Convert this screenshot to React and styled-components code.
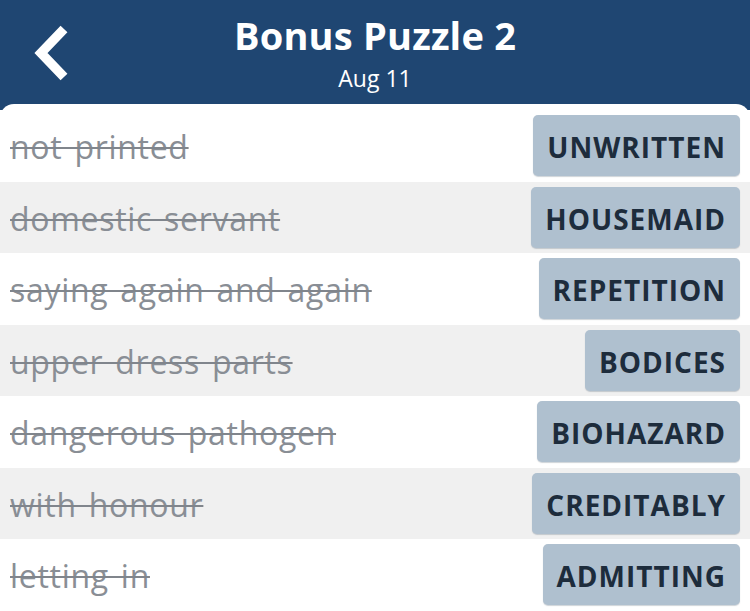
import React from 'react';
import styled, { createGlobalStyle } from 'styled-components';

const GlobalStyle = createGlobalStyle`
  html, body {
    margin: 0;
    padding: 0;
    background: #1f4672;
    font-family: 'Open Sans', 'Liberation Sans', sans-serif;
  }
`;

const Page = styled.div`
  width: 750px;
  height: 611px;
  overflow: hidden;
  background: #1f4672;
  display: flex;
  flex-direction: column;
`;

const Header = styled.header`
  height: 104px;
  display: grid;
  grid-template-columns: 1fr auto 1fr;
  align-items: start;
  color: #fff;
`;

const BackButton = styled.button`
  justify-self: start;
  margin: 25px 0 0 31px;
  padding: 0;
  border: none;
  background: none;
  width: 40px;
  height: 56px;
  cursor: pointer;
`;

const TitleBlock = styled.div`
  display: flex;
  flex-direction: column;
  align-items: center;
  padding-top: 9px;
`;

const Title = styled.h1`
  margin: 0;
  font-size: 38px;
  font-weight: 700;
  line-height: 52px;
  letter-spacing: 0.2px;
`;

const Subtitle = styled.div`
  font-size: 23px;
  line-height: 32px;
  margin-top: 1px;
`;

const Card = styled.main`
  flex: 1;
  background: #fff;
  border-radius: 14px 14px 0 0;
  padding-top: 6px;
`;

const Row = styled.div`
  height: 71.5px;
  display: flex;
  align-items: center;
  justify-content: space-between;
  padding: 0 10px 0 10px;
  background: ${(p) => (p.$shaded ? '#f0f0f0' : '#fff')};
`;

const Clue = styled.span`
  font-size: 32px;
  letter-spacing: 0.7px;
  word-spacing: 3px;
  color: #898e95;
  text-decoration: line-through;
  text-decoration-thickness: 2px;
  text-decoration-color: #80858c;
  padding-top: 2px;
`;

const Answer = styled.div`
  height: 61px;
  display: flex;
  align-items: center;
  padding: 3px 14px 0 14px;
  box-sizing: border-box;
  background: #afc0cf;
  border-radius: 5px;
  box-shadow: 0 1px 1px rgba(60, 80, 100, 0.25);
  color: #1d2c3c;
  font-size: 28px;
  font-weight: 700;
  letter-spacing: 1px;
`;

const entries = [
  ['not printed', 'UNWRITTEN'],
  ['domestic servant', 'HOUSEMAID'],
  ['saying again and again', 'REPETITION'],
  ['upper dress parts', 'BODICES'],
  ['dangerous pathogen', 'BIOHAZARD'],
  ['with honour', 'CREDITABLY'],
  ['letting in', 'ADMITTING'],
];

const App = () => {
  return (
    <>
      <GlobalStyle />
      <Page>
        <Header>
          <BackButton aria-label="Back">
            <svg width="40" height="56" viewBox="0 0 40 56">
              <polyline
                points="33,4 10,28 33,52"
                fill="none"
                stroke="#fff"
                strokeWidth="9.5"
                strokeLinejoin="miter"
              />
            </svg>
          </BackButton>
          <TitleBlock>
            <Title>Bonus Puzzle 2</Title>
            <Subtitle>Aug 11</Subtitle>
          </TitleBlock>
          <div />
        </Header>
        <Card>
          {entries.map(([clue, answer], i) => (
            <Row key={answer} $shaded={i % 2 === 1}>
              <Clue>{clue}</Clue>
              <Answer>{answer}</Answer>
            </Row>
          ))}
        </Card>
      </Page>
    </>
  );
};

export default App;
